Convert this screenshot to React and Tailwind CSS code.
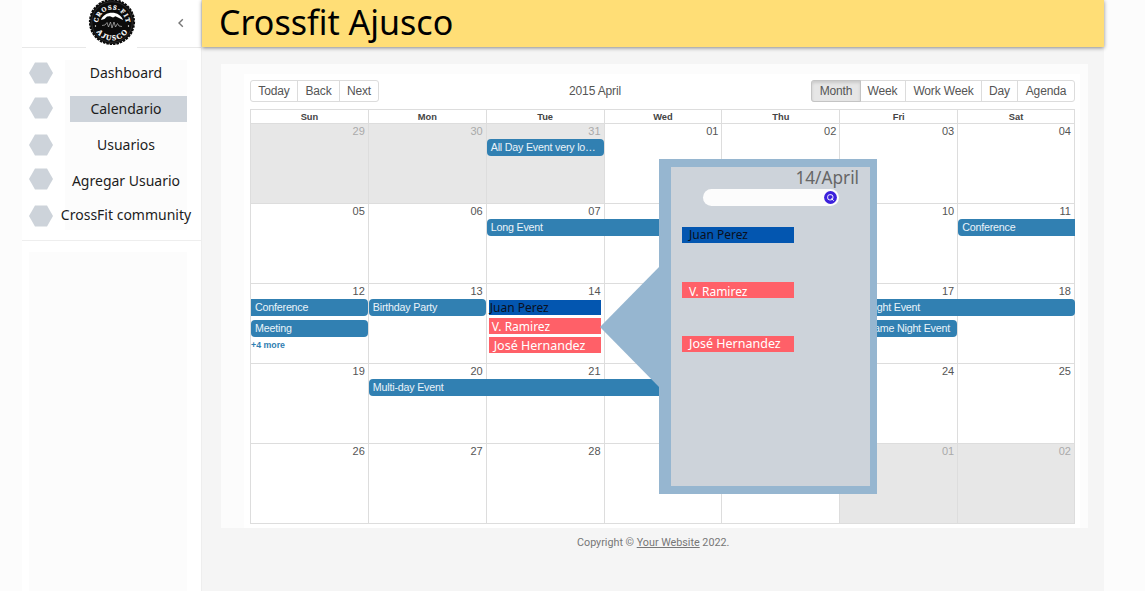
import React from 'react';

const NAV = [
  { label: 'Dashboard', box: 'h-[35px]', hex: 'mt-[62px]' },
  { label: 'Calendario', box: 'h-[36px] pt-[1px]', hex: 'mt-[13px]', active: true },
  { label: 'Usuarios', box: 'h-[37px] pt-[1px]', hex: 'mt-[15px]' },
  { label: 'Agregar Usuario', box: 'h-[34px]', hex: 'mt-[12px]' },
  { label: 'CrossFit community', box: 'h-[28px]', hex: 'mt-[15px]' },
];

const COLS = ['col-start-1', 'col-start-2', 'col-start-3', 'col-start-4', 'col-start-5', 'col-start-6', 'col-start-7'];
const DAYS = ['Sun', 'Mon', 'Tue', 'Wed', 'Thu', 'Fri', 'Sat'];

const WEEKS = [
  {
    days: ['29', '30', '31', '01', '02', '03', '04'],
    off: [0, 1, 2],
    events: [{ t: 'All Day Event very lo…', c: 'col-start-3 row-start-2 rounded-[4px]' }],
  },
  {
    days: ['05', '06', '07', '', '', '10', '11'],
    off: [],
    events: [
      { t: 'Long Event', c: 'col-start-3 col-span-3 row-start-2 rounded-[4px]' },
      { t: 'Conference', c: 'col-start-7 row-start-2 rounded-l-[4px]' },
    ],
  },
  {
    days: ['12', '13', '14', '', '', '17', '18'],
    off: [],
    events: [
      { t: 'Conference', c: 'col-start-1 row-start-2 rounded-r-[4px]' },
      { t: 'Birthday Party', c: 'col-start-2 row-start-2 rounded-[4px]' },
      { t: 'Late Night Event', c: 'col-start-6 col-span-2 row-start-2 rounded-r-[4px]' },
      { t: 'Meeting', c: 'col-start-1 row-start-4 rounded-[4px]' },
      { t: 'Late Same Night Event', c: 'col-start-6 row-start-4 rounded-r-[4px]' },
    ],
    more: true,
    people: true,
  },
  {
    days: ['19', '20', '21', '', '', '24', '25'],
    off: [],
    events: [{ t: 'Multi-day Event', c: 'col-start-2 col-span-3 row-start-2 rounded-[4px]' }],
  },
  {
    days: ['26', '27', '28', '', '', '01', '02'],
    off: [5, 6],
    events: [],
  },
];

function Hexagon() {
  return (
    <svg viewBox="0 0 24 22" className="block h-[22px] w-[24px]">
      <path d="M6 0.5H18L24 11L18 21.5H6L0 11Z" fill="#cdd3da" />
    </svg>
  );
}

function Logo() {
  return (
    <svg viewBox="0 0 48 48" className="block h-[48px] w-[48px]">
      <defs>
        <path id="arcTop" d="M10 25.500A14 14 0 0 1 38 25.500" />
        <path id="arcBottom" d="M5.500 24A18.500 18.500 0 0 0 42.500 24" />
      </defs>
      <circle cx="24" cy="24" r="22" fill="#0b0b0b" />
      <circle cx="24" cy="24" r="22.200" fill="none" stroke="#0b0b0b" strokeWidth="1.800" strokeDasharray="2.500 0.950" />
      <circle cx="24" cy="24" r="20.300" fill="none" stroke="#666" strokeWidth="0.350" />
      <path d="M13 22C14.500 17.500 19 14.800 24 14.800S33.500 17.500 35 22L32 20.500L30 19.500L27.500 18.200L25 19.500L22 18.200L19 18.500L16.500 21Z" fill="#fff" />
      <path d="M14 27.500l3-0.500 2-2.500 1.500 4.500 2-5 1.500 6 2-6 1.500 5 2-3.500 1.500 2.500 3 0.500" fill="none" stroke="#bbb" strokeWidth="0.700" />
      <text fill="#fff" stroke="#fff" strokeWidth="0.200" fontSize="6.500" fontWeight="700" fontFamily="Liberation Serif, serif">
        <textPath href="#arcTop" startOffset="50%" textAnchor="middle" textLength="42">CROSS-FIT</textPath>
      </text>
      <text fill="#fff" stroke="#fff" strokeWidth="0.200" fontSize="7.500" fontWeight="700" fontFamily="Liberation Serif, serif">
        <textPath href="#arcBottom" startOffset="50%" textAnchor="middle" textLength="37">AJUSCO</textPath>
      </text>
      <circle cx="7.500" cy="28" r="0.700" fill="#fff" />
      <circle cx="40.500" cy="28" r="0.700" fill="#fff" />
    </svg>
  );
}

function Sidebar() {
  return (
    <aside className="flex w-[180px] shrink-0 flex-col border-r border-[#eeeeee] bg-white">
      <div className="flex h-[48px] shrink-0 items-start border-b border-[#e8e8e8]">
        <div className="-mt-[2px] ml-[64px] h-[50px] w-[51px] bg-white pl-[1.5px]">
          <Logo />
        </div>
        <svg viewBox="0 0 8 10" className="ml-[40px] mt-[18px] h-[10px] w-[8px]">
          <path d="M5.800 1.200L2 5L5.800 8.800" fill="none" stroke="#777" strokeWidth="1.400" />
        </svg>
      </div>
      <div className="flex h-[193px] shrink-0 border-b border-[#eeeeee]">
        <div className="-mt-[48px] ml-[7px] w-[24px]">
          {NAV.map((n) => (
            <div key={n.label} className={n.hex}>
              <Hexagon />
            </div>
          ))}
        </div>
        <nav className="ml-[12px] mt-[12px] flex h-[170px] w-[122px] flex-col bg-[#fcfcfc] font-['Noto_Sans',sans-serif] text-[14px] leading-[26px] text-[#1c1c1c]">
          {NAV.map((n) => (
            <div key={n.label} className={`flex shrink-0 justify-center ${n.box}`}>
              <a
                className={
                  n.active
                    ? 'ml-[5px] block h-[26px] w-[117px] whitespace-nowrap bg-[#cdd3da] pr-[5px] text-center leading-[25px]'
                    : 'block whitespace-nowrap'
                }
              >
                {n.label}
              </a>
            </div>
          ))}
        </nav>
      </div>
      <div className="ml-[7px] mt-[11px] w-[158px] grow bg-[#fcfcfc]" />
    </aside>
  );
}

function Toolbar() {
  return (
    <div className="flex h-[22px] items-center text-[12px] tracking-[-0.15px] text-[#555]">
      <div className="flex h-[22px] w-[129px] rounded-[3px] border border-[#dcdcdc] leading-[19px]">
        <button className="w-[47px] border-r border-[#dcdcdc]">Today</button>
        <button className="w-[42px] border-r border-[#dcdcdc]">Back</button>
        <button className="grow">Next</button>
      </div>
      <span className="grow text-center leading-[20px]">2015 April</span>
      <div className="flex h-[22px] w-[264px] rounded-[3px] border border-[#dcdcdc] leading-[19px]">
        <button className="-m-px w-[50px] rounded-l-[3px] border border-[#c4c4c4] bg-[#e6e6e6] shadow-[inset_0_2px_3px_rgba(0,0,0,0.12)]">Month</button>
        <button className="w-[46px] border-r border-[#dcdcdc]">Week</button>
        <button className="w-[76px] border-r border-[#dcdcdc]">Work Week</button>
        <button className="w-[36px] border-r border-[#dcdcdc]">Day</button>
        <button className="grow">Agenda</button>
      </div>
    </div>
  );
}

function People() {
  const base = "flex items-center whitespace-nowrap pl-[3px] font-['Noto_Sans',sans-serif] leading-[15px]";
  return (
    <div className="z-10 col-start-3 row-span-4 row-start-2 ml-[3px] flex w-[112px] flex-col gap-[3px] pt-[1px]">
      <div className={`${base} h-[15px] bg-[#0356b0] -indent-[2px] text-[12px] text-[#0a1020]`}>Juan Perez</div>
      <div className={`${base} h-[16px] bg-[#ff6068] text-[12px] text-white`}>V. Ramirez</div>
      <div className={`${base} h-[16px] bg-[#ff6068] indent-[2px] text-[12.5px] text-white`}>José Hernandez</div>
    </div>
  );
}

function Week({ week }) {
  return (
    <div className="grid h-[80px] grid-cols-7 grid-rows-[15px_17px_4px_17px_1fr] border-t border-[#dddddd]">
      {week.days.map((d, i) => (
        <div
          key={d + i}
          className={`${COLS[i]} row-span-full row-start-1 border-l border-[#dddddd] pr-[3px] text-right text-[11px] leading-[14px] ${i === 6 ? 'border-r' : ''} ${
            week.off.includes(i) ? 'bg-[#e7e7e7] text-[#aaaaaa]' : 'text-[#555]'
          }`}
        >
          {d}
        </div>
      ))}
      {week.events.map((e) => (
        <div
          key={e.t + e.c}
          className={`${e.c} ml-px overflow-hidden whitespace-nowrap bg-[#3180b2] px-[4px] text-[10.7px] leading-[17px] tracking-[-0.2px] text-[#eaf3f9]`}
        >
          {e.t}
        </div>
      ))}
      {week.more && (
        <div className="col-start-1 row-start-5 pl-px pt-[3px] text-[8.8px] font-bold leading-[11px] text-[#3180b2]">+4 more</div>
      )}
      {week.people && <People />}
    </div>
  );
}

function Popup() {
  const row = "flex h-[16px] w-[112px] items-center whitespace-nowrap pl-[7px] font-['Noto_Sans',sans-serif]";
  return (
    <div className="absolute left-[600px] top-[159px] z-20 flex h-[335px] w-[277px]">
      <svg viewBox="0 0 60 335" className="block h-[335px] w-[60px] shrink-0">
        <path d="M60 107L0 168L60 229Z" fill="#96b6d0" />
      </svg>
      <div className="-ml-px grow bg-[#96b6d0] pb-[8px] pl-[12px] pr-[7px] pt-[8px]">
        <div className="h-[319px] bg-[#cdd3da] px-[11px]">
          <div className="h-[22px] text-right font-['Noto_Sans',sans-serif] text-[17.2px] leading-[21px] text-[#666]">14/April</div>
          <div className="ml-[21px] flex h-[17px] w-[136px] items-center justify-end rounded-full bg-[#fcfcfc] pr-[2px]">
            <svg viewBox="0 0 13 13" className="h-[13px] w-[13px]">
              <circle cx="6.500" cy="6.500" r="6.400" fill="#3b20dc" />
              <rect x="3.700" y="3.700" width="5.200" height="5.200" rx="2" fill="none" stroke="#fff" strokeWidth="1" />
              <path d="M7.300 7.500L9.700 9.700" stroke="#fff" strokeWidth="1" />
            </svg>
          </div>
          <div className={`${row} mt-[21px] bg-[#0356b0] text-[12px] text-[#0a1020]`}>Juan Perez</div>
          <div className={`${row} mt-[39px] bg-[#ff6068] pt-[3px] text-[12px] text-white`}>V. Ramirez</div>
          <div className={`${row} mt-[38px] bg-[#ff6068] text-[12.5px] text-white`}>José Hernandez</div>
        </div>
      </div>
    </div>
  );
}

export default function App() {
  return (
    <div className="relative flex h-[591px] w-[1145px] overflow-hidden bg-[#fcfcfc] pl-[22px] font-['Liberation_Sans',sans-serif]">
      <Sidebar />
      <main className="flex w-[902px] shrink-0 flex-col bg-[#f5f5f5]">
        <header className="h-[47px] shrink-0 bg-[#ffde76] pl-[17px] shadow-[0_1px_4px_rgba(0,0,0,0.45)]">
          <h1 className="font-['Noto_Sans',sans-serif] text-[34px] leading-[45px] text-black">Crossfit Ajusco</h1>
        </header>
        <section className="ml-[19px] mt-[17px] h-[464px] w-[867px] shrink-0 bg-[#fcfcfc] pl-[23px] pt-[10px]">
          <div className="h-[454px] w-[836px] bg-white pl-[6px] pt-[6px]">
            <div className="w-[825px]">
              <Toolbar />
              <div className="mt-[7px] border-b border-t border-[#dddddd]">
                <div className="grid h-[13px] grid-cols-7">
                  {DAYS.map((d, i) => (
                    <div
                      key={d}
                      className={`border-l border-[#dddddd] text-center text-[9.3px] font-bold leading-[14px] text-[#444] ${i === 6 ? 'border-r' : ''}`}
                    >
                      {d}
                    </div>
                  ))}
                </div>
                {WEEKS.map((w, i) => (
                  <Week key={i} week={w} />
                ))}
              </div>
            </div>
          </div>
        </section>
        <footer className="mt-[7px] pl-[375px] font-['Roboto',sans-serif] text-[10.75px] leading-[16px] text-[#777]">
          Copyright © <a className="underline">Your Website</a> 2022.
        </footer>
      </main>
      <Popup />
    </div>
  );
}
